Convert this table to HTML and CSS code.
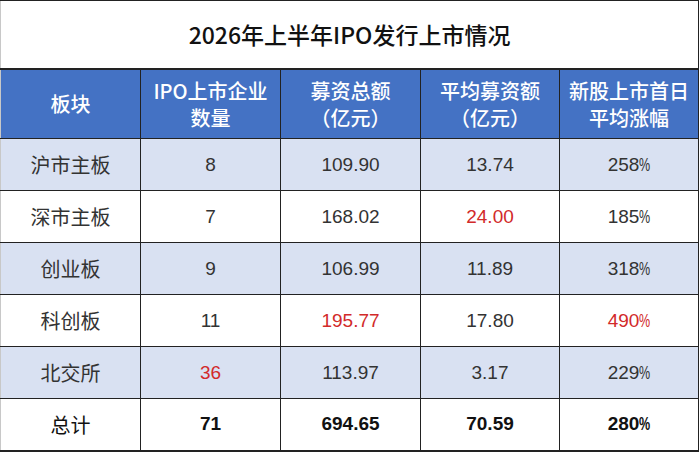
FILE: index.html
```html
<!DOCTYPE html>
<html lang="zh-CN">
<head>
<meta charset="utf-8">
<title>2026年上半年IPO发行上市情况</title>
<link rel="stylesheet" href="styles.css">
</head>
<body>
<table class="ipo">
  <colgroup>
    <col class="c1"><col class="c2"><col class="c3"><col class="c4"><col class="c5">
  </colgroup>
  <thead>
    <tr class="title-row"><th colspan="5" class="title">2026年上半年IPO发行上市情况</th></tr>
    <tr class="head-row">
      <th>板块</th>
      <th>IPO上市企业<br>数量</th>
      <th>募资总额<br>（亿元）</th>
      <th>平均募资额<br>（亿元）</th>
      <th>新股上市首日<br>平均涨幅</th>
    </tr>
  </thead>
  <tbody>
    <tr class="shade"><td class="name">沪市主板</td><td>8</td><td>109.90</td><td>13.74</td><td>258<span class="pct">%</span></td></tr>
    <tr><td class="name">深市主板</td><td>7</td><td>168.02</td><td class="red">24.00</td><td>185<span class="pct">%</span></td></tr>
    <tr class="shade"><td class="name">创业板</td><td>9</td><td>106.99</td><td>11.89</td><td>318<span class="pct">%</span></td></tr>
    <tr><td class="name">科创板</td><td>11</td><td class="red">195.77</td><td>17.80</td><td class="red">490<span class="pct">%</span></td></tr>
    <tr class="shade"><td class="name">北交所</td><td class="red">36</td><td>113.97</td><td>3.17</td><td>229<span class="pct">%</span></td></tr>
    <tr class="total"><td class="name">总计</td><td>71</td><td>694.65</td><td>70.59</td><td>280<span class="pct">%</span></td></tr>
  </tbody>
</table>
</body>
</html>
```
FILE: styles.css
```css
html, body {
  margin: 0;
  padding: 0;
  background: #ffffff;
}

body {
  font-family: "Liberation Sans", "Noto Sans CJK SC", sans-serif;
  color: #333333;
}

.ipo {
  width: 698px;
  table-layout: fixed;
  border-collapse: collapse;
  border-left: 1px solid #c8c8c8;
}

.c1, .c2, .c3 { width: 140px; }
.c4, .c5 { width: 139px; }

.ipo th,
.ipo td {
  border: 1px solid #222222;
  text-align: center;
  vertical-align: middle;
  padding: 0;
}

.ipo tr > :first-child {
  border-left: 1px solid #c8c8c8;
}

.title-row {
  height: 68px;
}

.title {
  font-family: "Noto Sans CJK SC", "Liberation Sans", sans-serif;
  font-size: 23px;
  font-weight: 500;
  color: #111111;
  background: #ffffff;
  border-top: 1px solid #111111;
  padding-top: 2px;
}

.head-row {
  height: 70px;
}

.head-row th {
  background: #4472c4;
  color: #ffffff;
  font-family: "Noto Sans CJK SC", "Liberation Sans", sans-serif;
  font-size: 20px;
  font-weight: 500;
  line-height: 27px;
  border-top: 2px solid #222222;
}

tbody tr {
  height: 52px;
}

tbody td {
  font-size: 19px;
  color: #333333;
}

tbody td.name {
  font-family: "Noto Sans CJK SC", "Liberation Sans", sans-serif;
  font-size: 20px;
}

.pct {
  display: inline-block;
  width: 11px;
  transform: scaleX(0.66);
  transform-origin: left center;
}

.shade td {
  background: #d9e1f2;
}

.red {
  color: #d22a2a !important;
}

.total td {
  font-weight: bold;
  color: #111111;
  border-bottom: 2px solid #222222;
}

.total td.name {
  font-weight: normal;
  color: #111111;
}
```
